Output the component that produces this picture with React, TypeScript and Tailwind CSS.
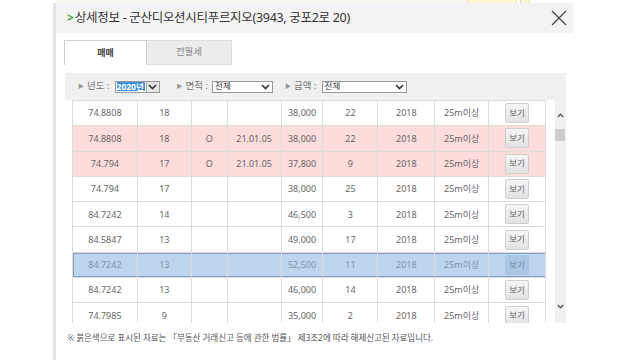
import React from "react";

type Row = { a: string; b: string; c: string; d: string; e: string; f: string; kind: "n" | "p" | "s" };

const rows: Row[] = [
  { a: "74.8808", b: "18", c: "", d: "", e: "38,000", f: "22", kind: "n" },
  { a: "74.8808", b: "18", c: "O", d: "21.01.05", e: "38,000", f: "22", kind: "p" },
  { a: "74.794", b: "17", c: "O", d: "21.01.05", e: "37,800", f: "9", kind: "p" },
  { a: "74.794", b: "17", c: "", d: "", e: "38,000", f: "25", kind: "n" },
  { a: "84.7242", b: "14", c: "", d: "", e: "46,500", f: "3", kind: "n" },
  { a: "84.5847", b: "13", c: "", d: "", e: "49,000", f: "17", kind: "n" },
  { a: "84.7242", b: "13", c: "", d: "", e: "52,500", f: "11", kind: "s" },
  { a: "84.7242", b: "13", c: "", d: "", e: "46,000", f: "14", kind: "n" },
  { a: "74.7985", b: "9", c: "", d: "", e: "35,000", f: "2", kind: "n" },
];

const cell = "flex items-center justify-center border-r border-[#dcdcdc] h-full";

function Chevron({ className = "" }: { className?: string }) {
  return (
    <svg width="9" height="6" viewBox="0 0 9 6" className={className}>
      <path d="M1 1 L4.5 4.5 L8 1" stroke="#333" strokeWidth="1.6" fill="none" />
    </svg>
  );
}

function Label({ text }: { text: string }) {
  return (
    <span className="flex items-center text-[9.5px] text-[#777]">
      <span className="text-[6px] text-[#999] mr-[3px]">▶</span>
      {text} :
    </span>
  );
}

export default function App() {
  return (
    <div
      className="w-[640px] h-[360px] bg-white overflow-hidden flex flex-col"
      style={{ fontFamily: '"Noto Sans", "Noto Sans CJK KR", sans-serif' }}
    >
      <div className="h-[3px] flex shrink-0">
        <div className="w-[56px]" />
        <div className="w-[411px] bg-[#f6f6f0]" />
        <div className="w-[50px] bg-[#fbf6d8] border-x border-[#e8dfb0]" />
        <div className="w-[3px]" />
        <div className="w-[10px] bg-[#fbf6d8] border-x border-[#e8dfb0]" />
      </div>
      <div className="ml-[53px] w-[520px] flex-1 flex flex-col border-l-[3px] border-[#e4e4e4]">
        {/* title bar */}
        <div className="h-[30px] bg-[#f3f3f3] flex items-center pl-[11px] pr-[6px] shrink-0">
          <span className="text-[#3aa63a] text-[12px] font-bold leading-none mr-[1px]">&gt;</span>
          <span className="text-[12.5px] text-[#333] tracking-[-0.3px]">
            상세정보 - 군산디오션시티푸르지오(3943, 궁포2로 20)
          </span>
          <div className="flex-1" />
          <svg width="16" height="16" viewBox="0 0 16 16">
            <path d="M1 1 L15 15 M15 1 L1 15" stroke="#444" strokeWidth="1.2" fill="none" />
          </svg>
        </div>
        {/* tabs */}
        <div className="mt-[7px] ml-[8px] flex h-[25px] shrink-0">
          <div className="w-[83px] h-full bg-white border border-b-0 border-[#cfcfcf] flex items-center justify-center text-[9px] font-bold text-[#444]">
            매매
          </div>
          <div className="w-[85px] h-full bg-[#ececec] border border-l-0 border-[#dedede] flex items-center justify-center text-[9.5px] text-[#888]">
            전월세
          </div>
        </div>
        {/* filter bar */}
        <div className="mt-[8px] ml-[9px] w-[501px] h-[27px] bg-[#f0f0f0] flex items-center pl-[13px] shrink-0">
          <Label text="년도" />
          <div className="ml-[5px] w-[45px] h-[12px] bg-white border border-[#9a9a9a] flex items-center">
            <span className="ml-[1px] h-[9px] w-[28px] bg-[#3b8fde] text-white text-[8.5px] leading-[9px] font-bold flex items-center">
              2020년
            </span>
            <div className="flex-1" />
            <div className="w-[13px] h-full bg-[#e4e4e4] border-l border-[#aaa] flex items-center justify-center">
              <Chevron />
            </div>
          </div>
          <div className="w-[17px]" />
          <Label text="면적" />
          <div className="ml-[4px] w-[61px] h-[12px] bg-white border border-[#9a9a9a] flex items-center px-[2px]">
            <span className="text-[8.5px] text-[#333] leading-none">전체</span>
            <div className="flex-1" />
            <Chevron />
          </div>
          <div className="w-[12px]" />
          <Label text="금액" />
          <div className="ml-[5px] w-[85px] h-[12px] bg-white border border-[#9a9a9a] flex items-center px-[2px]">
            <span className="text-[8.5px] text-[#333] leading-none">전체</span>
            <div className="flex-1" />
            <Chevron />
          </div>
        </div>
        {/* table + scrollbar */}
        <div className="ml-[16px] flex h-[223px] shrink-0">
          <div className="w-[474px] h-full overflow-hidden border-l border-t border-[#dcdcdc]">
            {rows.map((r, i) => {
              const bg =
                r.kind === "p"
                  ? "bg-[#fddcdc]"
                  : r.kind === "s"
                  ? "bg-[#bdd6ee] shadow-[inset_0_0_0_1px_#7f9fc2]"
                  : "bg-white";
              const tc = r.kind === "s" ? "text-[#7d93aa]" : "text-[#666]";
              const btn =
                r.kind === "s"
                  ? "bg-[#a9c7e5] border-[#a9c7e5] text-[#6f88a5]"
                  : "bg-gradient-to-b from-[#f5f5f5] to-[#e2e2e2] border-[#cfcfcf] text-[#666]";
              return (
                <div
                  key={i}
                  className={`flex h-[25.3px] border-b border-[#dcdcdc] text-[9px] ${bg} ${tc}`}
                >
                  <div className={`${cell} w-[65px]`}>{r.a}</div>
                  <div className={`${cell} w-[54px]`}>{r.b}</div>
                  <div className={`${cell} w-[36px]`}>{r.c}</div>
                  <div className={`${cell} w-[54px]`}>{r.d}</div>
                  <div className={`${cell} w-[42px]`}>{r.e}</div>
                  <div className={`${cell} w-[55px]`}>{r.f}</div>
                  <div className={`${cell} w-[57px]`}>2018</div>
                  <div className={`${cell} w-[54px]`}>25m이상</div>
                  <div className={`${cell} w-[57px]`}>
                    <div className={`w-[24px] h-[20px] border rounded-[2px] flex items-center justify-center text-[8.5px] ${btn}`}>
                      보기
                    </div>
                  </div>
                </div>
              );
            })}
          </div>
          <div className="ml-[9px] w-[11px] h-full bg-[#f0f0f0] flex flex-col items-center">
            <svg width="7" height="5" viewBox="0 0 7 5" className="mt-[13px]">
              <path d="M0.8 4 L3.5 1.2 L6.2 4" stroke="#555" strokeWidth="1.4" fill="none" />
            </svg>
            <div className="mt-[11px] w-[10px] h-[12px] bg-[#cdcdcd] self-start" />
            <div className="flex-1" />
            <svg width="7" height="5" viewBox="0 0 7 5" className="mb-[14px]">
              <path d="M0.8 1 L3.5 3.8 L6.2 1" stroke="#555" strokeWidth="1.4" fill="none" />
            </svg>
          </div>
        </div>
        {/* note */}
        <div className="mt-[9px] ml-[11px] text-[8.6px] text-[#555] tracking-[-0.1px] whitespace-nowrap">
          ※ 붉은색으로 표시된 자료는 「부동산 거래신고 등에 관한 법률」 제3조2에 따라 해제신고된 자료입니다.
        </div>
      </div>
    </div>
  );
}
